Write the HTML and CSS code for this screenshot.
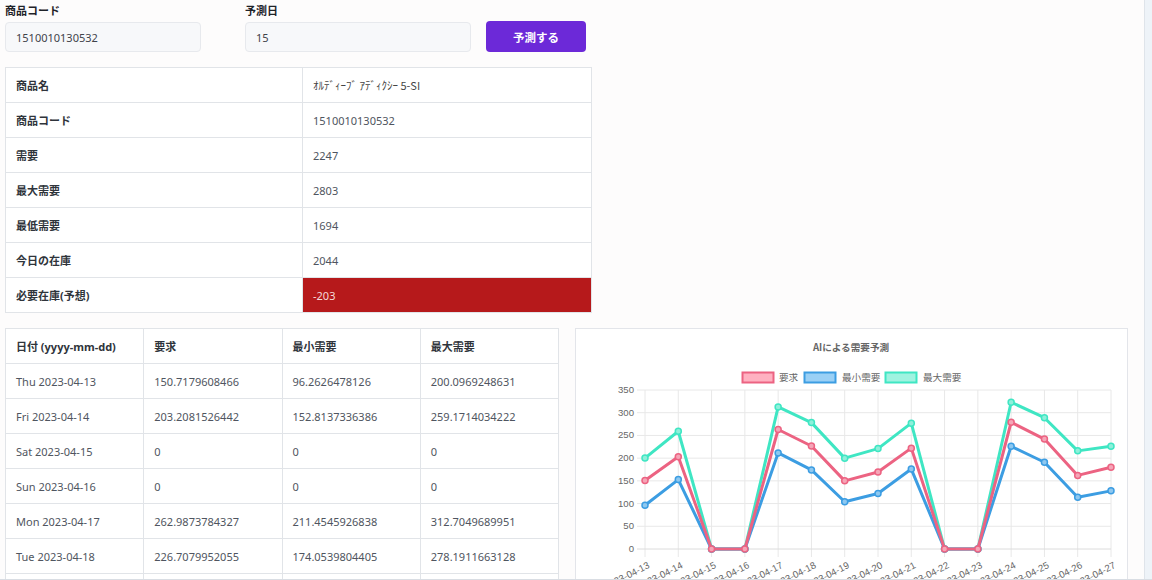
FILE: index.html
```html
<!DOCTYPE html>
<html lang="ja">
<head>
<meta charset="utf-8">
<title>需要予測</title>
<link rel="stylesheet" href="styles.css">
</head>
<body>
<div class="page">
  <main class="main">
    <form class="search">
      <div class="field field-code">
        <label class="label">商品コード</label>
        <input class="input" type="text" value="1510010130532">
      </div>
      <div class="field field-days">
        <label class="label">予測日</label>
        <input class="input" type="text" value="15">
      </div>
      <button class="btn" type="button">予測する</button>
    </form>

    <table class="info">
      <tr><th>商品名</th><td class="kana">ｵﾙﾃﾞｨｰﾌﾞ ｱﾃﾞｨｸｼｰ 5-SI</td></tr>
      <tr><th>商品コード</th><td>1510010130532</td></tr>
      <tr><th>需要</th><td>2247</td></tr>
      <tr><th>最大需要</th><td>2803</td></tr>
      <tr><th>最低需要</th><td>1694</td></tr>
      <tr><th>今日の在庫</th><td>2044</td></tr>
      <tr><th>必要在庫(予想)</th><td class="alert">-203</td></tr>
    </table>

    <div class="lower">
      <table class="forecast">
        <tr><th>日付 (yyyy-mm-dd)</th><th>要求</th><th>最小需要</th><th>最大需要</th></tr>
        <tr><td>Thu 2023-04-13</td><td>150.7179608466</td><td>96.2626478126</td><td>200.0969248631</td></tr>
        <tr><td>Fri 2023-04-14</td><td>203.2081526442</td><td>152.8137336386</td><td>259.1714034222</td></tr>
        <tr><td>Sat 2023-04-15</td><td>0</td><td>0</td><td>0</td></tr>
        <tr><td>Sun 2023-04-16</td><td>0</td><td>0</td><td>0</td></tr>
        <tr><td>Mon 2023-04-17</td><td>262.9873784327</td><td>211.4545926838</td><td>312.7049689951</td></tr>
        <tr><td>Tue 2023-04-18</td><td>226.7079952055</td><td>174.0539804405</td><td>278.1911663128</td></tr>
        <tr><td></td><td></td><td></td><td></td></tr>
      </table>

      <div class="chart-card">
        <svg class="chart" width="551" height="300" viewBox="0 0 551 300">
          <text class="c-title" x="275" y="22">AIによる需要予測</text>
          <!-- legend -->
          <rect x="166.5" y="43.5" width="31" height="10" fill="rgba(255,99,132,0.5)" stroke="#ec6382" stroke-width="2"/>
          <text class="c-leg" x="203" y="52">要求</text>
          <rect x="228.5" y="43.5" width="31" height="10" fill="rgba(54,162,235,0.5)" stroke="#3c9de2" stroke-width="2"/>
          <text class="c-leg" x="266" y="52">最小需要</text>
          <rect x="309.5" y="43.5" width="31" height="10" fill="rgba(64,232,194,0.5)" stroke="#3fe6c3" stroke-width="2"/>
          <text class="c-leg" x="347" y="52">最大需要</text>

          <!-- grid -->
          <g class="grid">
            <line x1="61" y1="61" x2="535" y2="61"/>
            <line x1="61" y1="83.71" x2="535" y2="83.71"/>
            <line x1="61" y1="106.43" x2="535" y2="106.43"/>
            <line x1="61" y1="129.14" x2="535" y2="129.14"/>
            <line x1="61" y1="151.86" x2="535" y2="151.86"/>
            <line x1="61" y1="174.57" x2="535" y2="174.57"/>
            <line x1="61" y1="197.29" x2="535" y2="197.29"/>
            <line x1="69" y1="61" x2="69" y2="228"/>
            <line x1="102.29" y1="61" x2="102.29" y2="228"/>
            <line x1="135.57" y1="61" x2="135.57" y2="228"/>
            <line x1="168.86" y1="61" x2="168.86" y2="228"/>
            <line x1="202.14" y1="61" x2="202.14" y2="228"/>
            <line x1="235.43" y1="61" x2="235.43" y2="228"/>
            <line x1="268.71" y1="61" x2="268.71" y2="228"/>
            <line x1="302" y1="61" x2="302" y2="228"/>
            <line x1="335.29" y1="61" x2="335.29" y2="228"/>
            <line x1="368.57" y1="61" x2="368.57" y2="228"/>
            <line x1="401.86" y1="61" x2="401.86" y2="228"/>
            <line x1="435.14" y1="61" x2="435.14" y2="228"/>
            <line x1="468.43" y1="61" x2="468.43" y2="228"/>
            <line x1="501.71" y1="61" x2="501.71" y2="228"/>
            <line x1="535" y1="61" x2="535" y2="228"/>
          </g>
          <line class="axis" x1="61" y1="220" x2="535" y2="220"/>

          <!-- y labels -->
          <g class="c-y">
            <text x="58" y="64">350</text>
            <text x="58" y="86.7">300</text>
            <text x="58" y="109.4">250</text>
            <text x="58" y="132.1">200</text>
            <text x="58" y="154.9">150</text>
            <text x="58" y="177.6">100</text>
            <text x="58" y="200.3">50</text>
            <text x="58" y="223">0</text>
          </g>

          <!-- x labels -->
          <g class="c-x">
            <text x="71" y="232" transform="rotate(-27 71 232)">2023-04-13</text>
            <text x="104.29" y="232" transform="rotate(-27 104.29 232)">2023-04-14</text>
            <text x="137.57" y="232" transform="rotate(-27 137.57 232)">2023-04-15</text>
            <text x="170.86" y="232" transform="rotate(-27 170.86 232)">2023-04-16</text>
            <text x="204.14" y="232" transform="rotate(-27 204.14 232)">2023-04-17</text>
            <text x="237.43" y="232" transform="rotate(-27 237.43 232)">2023-04-18</text>
            <text x="270.71" y="232" transform="rotate(-27 270.71 232)">2023-04-19</text>
            <text x="304" y="232" transform="rotate(-27 304 232)">2023-04-20</text>
            <text x="337.29" y="232" transform="rotate(-27 337.29 232)">2023-04-21</text>
            <text x="370.57" y="232" transform="rotate(-27 370.57 232)">2023-04-22</text>
            <text x="403.86" y="232" transform="rotate(-27 403.86 232)">2023-04-23</text>
            <text x="437.14" y="232" transform="rotate(-27 437.14 232)">2023-04-24</text>
            <text x="470.43" y="232" transform="rotate(-27 470.43 232)">2023-04-25</text>
            <text x="503.71" y="232" transform="rotate(-27 503.71 232)">2023-04-26</text>
            <text x="537" y="232" transform="rotate(-27 537 232)">2023-04-27</text>
          </g>

          <!-- 最大需要 -->
          <g class="s-max">
            <polyline points="69,129.1 102.29,102.25 135.57,220 168.86,220 202.14,77.94 235.43,93.62 268.71,129.14 302,119.6 335.29,94.16 368.57,220 401.86,220 435.14,73.26 468.43,88.71 501.71,121.87 535,117.33"/>
            <circle cx="69" cy="129.1" r="3"/><circle cx="102.29" cy="102.25" r="3"/><circle cx="135.57" cy="220" r="3"/><circle cx="168.86" cy="220" r="3"/><circle cx="202.14" cy="77.94" r="3"/><circle cx="235.43" cy="93.62" r="3"/><circle cx="268.71" cy="129.14" r="3"/><circle cx="302" cy="119.6" r="3"/><circle cx="335.29" cy="94.16" r="3"/><circle cx="368.57" cy="220" r="3"/><circle cx="401.86" cy="220" r="3"/><circle cx="435.14" cy="73.26" r="3"/><circle cx="468.43" cy="88.71" r="3"/><circle cx="501.71" cy="121.87" r="3"/><circle cx="535" cy="117.33" r="3"/>
          </g>
          <!-- 最小需要 -->
          <g class="s-min">
            <polyline points="69,176.25 102.29,150.58 135.57,220 168.86,220 202.14,123.92 235.43,140.91 268.71,172.75 302,164.58 335.29,140.05 368.57,220 401.86,220 435.14,117.33 468.43,133.23 501.71,168.21 535,161.85"/>
            <circle cx="69" cy="176.25" r="3"/><circle cx="102.29" cy="150.58" r="3"/><circle cx="135.57" cy="220" r="3"/><circle cx="168.86" cy="220" r="3"/><circle cx="202.14" cy="123.92" r="3"/><circle cx="235.43" cy="140.91" r="3"/><circle cx="268.71" cy="172.75" r="3"/><circle cx="302" cy="164.58" r="3"/><circle cx="335.29" cy="140.05" r="3"/><circle cx="368.57" cy="220" r="3"/><circle cx="401.86" cy="220" r="3"/><circle cx="435.14" cy="117.33" r="3"/><circle cx="468.43" cy="133.23" r="3"/><circle cx="501.71" cy="168.21" r="3"/><circle cx="535" cy="161.85" r="3"/>
          </g>
          <!-- 要求 -->
          <g class="s-req">
            <polyline points="69,151.54 102.29,127.69 135.57,220 168.86,220 202.14,100.52 235.43,117.01 268.71,151.86 302,143 335.29,119.15 368.57,220 401.86,220 435.14,93.25 468.43,110.06 501.71,146.41 535,138.23"/>
            <circle cx="69" cy="151.54" r="3"/><circle cx="102.29" cy="127.69" r="3"/><circle cx="135.57" cy="220" r="3"/><circle cx="168.86" cy="220" r="3"/><circle cx="202.14" cy="100.52" r="3"/><circle cx="235.43" cy="117.01" r="3"/><circle cx="268.71" cy="151.86" r="3"/><circle cx="302" cy="143" r="3"/><circle cx="335.29" cy="119.15" r="3"/><circle cx="368.57" cy="220" r="3"/><circle cx="401.86" cy="220" r="3"/><circle cx="435.14" cy="93.25" r="3"/><circle cx="468.43" cy="110.06" r="3"/><circle cx="501.71" cy="146.41" r="3"/><circle cx="535" cy="138.23" r="3"/>
          </g>
        </svg>
      </div>
    </div>
  </main>
  <div class="rail"></div>
</div>
</body>
</html>
```

FILE: styles.css
```css
* { box-sizing: border-box; }

html, body {
  margin: 0;
  padding: 0;
  background: #fdfcfc;
  font-family: "Noto Sans", "Noto Sans CJK JP", sans-serif;
  font-size: 11px;
  color: #4b5563;
}

.page {
  display: flex;
  height: 580px;
  overflow: hidden;
  border-bottom: 1px solid #d9dde3;
}

.main {
  flex: 1;
  min-width: 0;
  padding: 3px 0 0 5px;
  overflow: hidden;
}

.rail {
  width: 8px;
  flex: none;
  border-left: 1px solid #dfe4ea;
  background: #eef3f8;
}

/* search form */
.search {
  display: flex;
  align-items: flex-end;
}

.field { display: flex; flex-direction: column; }
.field-code { width: 196px; margin-right: 44px; }
.field-days { width: 226px; margin-right: 15px; }

.label {
  display: block;
  font-weight: 700;
  font-size: 11px;
  line-height: 16px;
  color: #1f2329;
  margin-bottom: 3px;
}

.input {
  height: 30px;
  width: 100%;
  border: 1px solid #e7e9ed;
  border-radius: 4px;
  background: #f7f8fa;
  padding: 0 10px;
  font-family: "Noto Sans", "Noto Sans CJK JP", sans-serif;
  font-size: 11px;
  color: #3f434a;
  outline: none;
}

.btn {
  width: 100px;
  height: 31px;
  border: 0;
  border-radius: 4px;
  background: #6c29d8;
  color: #fff;
  font-family: "Noto Sans CJK JP", sans-serif;
  font-weight: 700;
  font-size: 11.5px;
}

/* tables */
table {
  border-collapse: collapse;
  background: #fff;
}

th, td {
  border: 1px solid #e1e4e8;
  height: 35px;
  padding: 0 10px;
  text-align: left;
  vertical-align: middle;
  font-size: 11px;
}

th {
  font-weight: 700;
  color: #2f343b;
}

td { color: #4f5560; }

.info {
  margin-top: 15px;
  width: 587px;
}
.info th { width: 297px; }
.info td.kana {
  font-family: "Noto Sans CJK JP", sans-serif;
  font-size: 11px;
  color: #444;
}
.info td.alert {
  background: #b6191b;
  color: #f4dada;
}

.lower {
  display: flex;
  align-items: flex-start;
  gap: 16px;
  margin-top: 15px;
}

.forecast {
  width: 554px;
  table-layout: fixed;
  flex: none;
}

.chart-card {
  width: 553px;
  flex: none;
  height: 300px;
  border: 1px solid #e3e5ea;
  background: #fff;
}

.chart { display: block; }

.c-title {
  font-family: "Noto Sans CJK JP", sans-serif;
  font-size: 9.6px;
  font-weight: 700;
  fill: #666;
  text-anchor: middle;
}

.c-leg {
  font-family: "Noto Sans CJK JP", sans-serif;
  font-size: 9.6px;
  fill: #666;
}

.grid line { stroke: #e8e8e8; stroke-width: 1; }
.axis { stroke: #dcdcdc; stroke-width: 1; }

.c-y text {
  font-family: "Liberation Sans", sans-serif;
  font-size: 9.6px;
  fill: #666;
  text-anchor: end;
}

.c-x text {
  font-family: "Liberation Sans", sans-serif;
  font-size: 9.6px;
  fill: #666;
  text-anchor: end;
  dominant-baseline: hanging;
}

.s-max polyline, .s-min polyline, .s-req polyline {
  fill: none;
  stroke-width: 3;
  stroke-linejoin: round;
}
.s-max polyline { stroke: #3fe6c3; }
.s-max circle { fill: #8ef0da; stroke: #3fe6c3; stroke-width: 1.5; }
.s-min polyline { stroke: #3c9de2; }
.s-min circle { fill: #8ec8f0; stroke: #3c9de2; stroke-width: 1.5; }
.s-req polyline { stroke: #ec6382; }
.s-req circle { fill: #f5a5b7; stroke: #ec6382; stroke-width: 1.5; }
```
